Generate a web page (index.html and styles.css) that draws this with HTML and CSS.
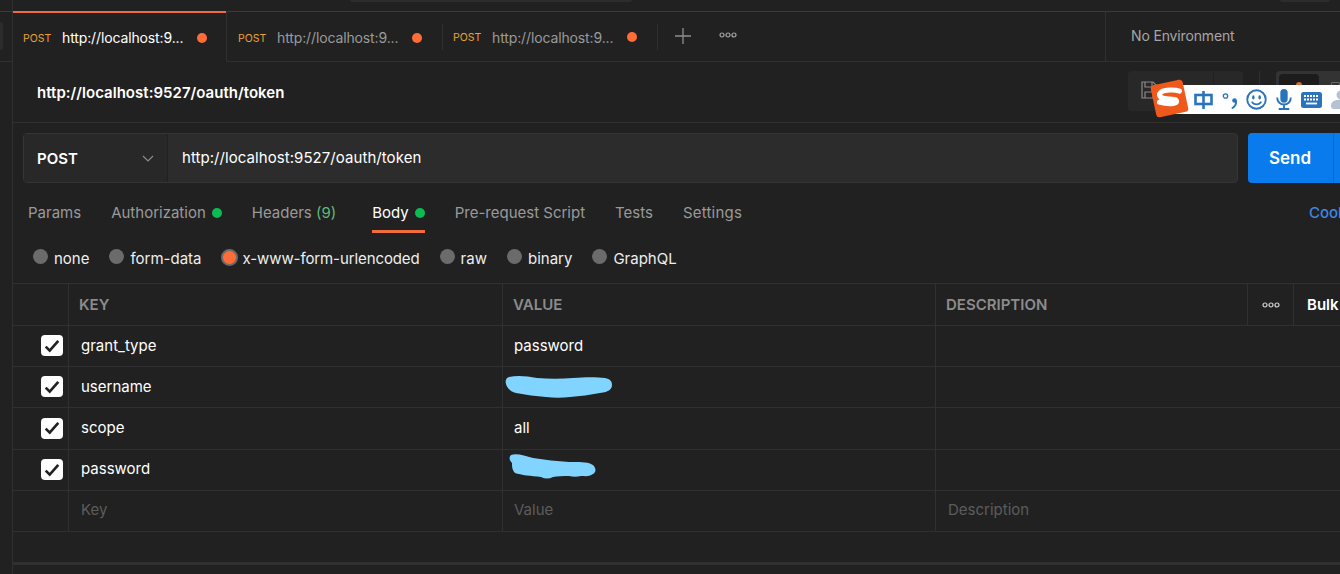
FILE: index.html
```html
<!DOCTYPE html>
<html lang="en">
<head>
<meta charset="utf-8">
<title>Postman</title>
<link rel="stylesheet" href="styles.css">
</head>
<body>
<div class="app">
  <aside class="rail">
    <div class="rail-top"><span class="rail-btn"></span></div>
  </aside>
  <div class="main">
    <div class="topbar"><span class="search"></span><span class="account"></span></div>
    <div class="tabrow">
      <div class="tab active"><span class="method">POST</span><span class="tab-url">http://localhost:9...</span><span class="dot"></span></div>
      <div class="tab"><span class="method">POST</span><span class="tab-url">http://localhost:9...</span><span class="dot"></span></div>
      <div class="tab last"><span class="method">POST</span><span class="tab-url">http://localhost:9...</span><span class="dot"></span></div>
      <div class="tab-tools">
        <svg class="plus" width="16" height="16" viewBox="0 0 16 16"><path d="M8 0v16M0 8h16" stroke="#8f8f8f" stroke-width="1.3"/></svg>
        <svg class="more" width="18" height="6" viewBox="0 0 18 6"><g fill="none" stroke="#a6a6a6" stroke-width="1.2"><circle cx="3" cy="3" r="2"/><circle cx="9" cy="3" r="2"/><circle cx="15" cy="3" r="2"/></g></svg>
      </div>
      <div class="env">No Environment</div>
    </div>
    <div class="titlerow">
      <span class="title">http://localhost:9527/oauth/token</span>
      <div class="title-actions">
        <div class="save">
          <svg width="16" height="18" viewBox="0 0 16 18"><g fill="none" stroke="#8a8a8a" stroke-width="1.2"><path d="M1 1h11l3 3v13H1z"/><path d="M4 1v5h7V1M4 17v-6h8v6"/></g></svg>
        </div>
        <div class="save-caret"></div>
        <div class="vsep"></div>
        <div class="mode"><div class="mode-on"><span class="mode-mark"></span></div><span class="mode-off"></span></div>
      </div>
    </div>
    <div class="urlrow">
      <div class="urlbox">
        <div class="verb"><span>POST</span>
          <svg width="12" height="7" viewBox="0 0 12 7"><path d="M1 1l5 5 5-5" fill="none" stroke="#8f8f8f" stroke-width="1.1"/></svg>
        </div>
        <div class="url">http://localhost:9527/oauth/token</div>
      </div>
      <div class="send"><span>Send</span></div>
    </div>
    <nav class="reqtabs">
      <span class="rt">Params</span>
      <span class="rt">Authorization<i class="gdot"></i></span>
      <span class="rt headers">Headers <em>(9)</em></span>
      <span class="rt on">Body<i class="gdot"></i></span>
      <span class="rt">Pre-request Script</span>
      <span class="rt">Tests</span>
      <span class="rt settings">Settings</span>
      <span class="cookies">Cookies</span>
    </nav>
    <div class="radios">
      <label class="radio"><i></i>none</label>
      <label class="radio tight"><i></i>form-data</label>
      <label class="radio sel"><i></i>x-www-form-urlencoded</label>
      <label class="radio"><i></i>raw</label>
      <label class="radio"><i></i>binary</label>
      <label class="radio"><i></i>GraphQL</label>
    </div>
    <div class="table">
      <div class="row head">
        <div class="c c0"></div>
        <div class="c c1">KEY</div>
        <div class="c c2">VALUE</div>
        <div class="c c3">DESCRIPTION</div>
        <div class="c c4"><svg width="18" height="6" viewBox="0 0 18 6"><g fill="none" stroke="#d4d4d4" stroke-width="1.2"><circle cx="3" cy="3" r="2"/><circle cx="9" cy="3" r="2"/><circle cx="15" cy="3" r="2"/></g></svg></div>
        <div class="c c5">Bulk Edit</div>
      </div>
      <div class="row">
        <div class="c c0"><span class="check"><svg width="16" height="14" viewBox="0 0 14 12"><path d="M1.500 6.500l3.500 3.500 7.500-8.500" fill="none" stroke="#212121" stroke-width="2.300"/></svg></span></div>
        <div class="c c1">grant_type</div>
        <div class="c c2">password</div>
        <div class="c c3"></div>
      </div>
      <div class="row">
        <div class="c c0"><span class="check"><svg width="16" height="14" viewBox="0 0 14 12"><path d="M1.500 6.500l3.500 3.500 7.500-8.500" fill="none" stroke="#212121" stroke-width="2.300"/></svg></span></div>
        <div class="c c1">username</div>
        <div class="c c2 blobcell">
          <svg class="blob" width="108" height="24" viewBox="0 0 108 24"><path d="M4 2C12 0 22 1 32 3c12 1 24 1 36 0 12-1 24-1 32 0 5 1 7 3 7 7s-3 7-12 8c-10 2-20 3-30 4-8 1-16 1-24 0-10-1-20-2-30-4C6 17 2 13 1 9 0 6 1 3 4 2z" fill="#80d4ff"/></svg>
        </div>
        <div class="c c3"></div>
      </div>
      <div class="row">
        <div class="c c0"><span class="check"><svg width="16" height="14" viewBox="0 0 14 12"><path d="M1.500 6.500l3.500 3.500 7.500-8.500" fill="none" stroke="#212121" stroke-width="2.300"/></svg></span></div>
        <div class="c c1">scope</div>
        <div class="c c2">all</div>
        <div class="c c3"></div>
      </div>
      <div class="row low">
        <div class="c c0"><span class="check"><svg width="16" height="14" viewBox="0 0 14 12"><path d="M1.500 6.500l3.500 3.500 7.500-8.500" fill="none" stroke="#212121" stroke-width="2.300"/></svg></span></div>
        <div class="c c1">password</div>
        <div class="c c2 blobcell">
          <svg class="blob blob2" width="88" height="26" viewBox="0 0 88 26"><path d="M2 1C8-1 16 2 24 4 36 6 48 7 60 8 70 8 78 8 82 10 87 12 88 18 84 20 80 23 76 22 72 22 68 23 64 23 60 22 54 22 48 22 44 23 40 25 36 25 32 23 22 22 12 21 6 19 3 16 3 12 3 9 0 6 0 3 2 1z" fill="#80d4ff"/></svg>
        </div>
        <div class="c c3"></div>
      </div>
      <div class="row ph low">
        <div class="c c0"></div>
        <div class="c c1">Key</div>
        <div class="c c2">Value</div>
        <div class="c c3">Description</div>
      </div>
    </div>
    <div class="resp"></div>
  </div>
</div>
<div class="ime">
  <svg class="ime-logo" width="40" height="40" viewBox="0 0 38 38">
    <rect x="3" y="3" width="31" height="31" rx="3" fill="#ef5a1c" transform="rotate(-12 18.500 18.500)"/>
    <path d="M28 11.500C24 10 14 10 10.500 12.500 7.500 15 9.500 18 14 18.500l9 1c3 .5 3 3 0 3.500-3 .6-9 .4-14-1" fill="none" stroke="#fff" stroke-width="4.800" stroke-linecap="round"/>
  </svg>
  <div class="ime-bar">
    <svg width="21" height="20" viewBox="0 0 20 20"><g fill="none" stroke="#2a74bb" stroke-width="2.600"><rect x="2" y="5" width="16" height="9"/><path d="M10 1v18"/></g></svg>
    <svg width="16" height="18" viewBox="0 0 16 18"><circle cx="3.500" cy="5" r="2.200" fill="none" stroke="#2a74bb" stroke-width="1.300"/><circle cx="12.500" cy="9.500" r="2.300" fill="#2a74bb"/><path d="M14 10c.5 3-1 5.500-3.500 7" fill="none" stroke="#2a74bb" stroke-width="1.800" stroke-linecap="round"/></svg>
    <svg width="21" height="21" viewBox="0 0 20 20"><circle cx="10" cy="10" r="8.800" fill="none" stroke="#2a74bb" stroke-width="1.800"/><ellipse cx="7" cy="8" rx="1.200" ry="2" fill="#2a74bb"/><ellipse cx="13" cy="8" rx="1.200" ry="2" fill="#2a74bb"/><path d="M5.500 12c2 3.500 7 3.500 9 0" fill="none" stroke="#2a74bb" stroke-width="1.600"/></svg>
    <svg width="18" height="21" viewBox="0 0 16 20"><rect x="4.500" y="0" width="7" height="13" rx="3.500" fill="#2a74bb"/><path d="M1.500 8c0 9 13 9 13 0M8 15v3M3 19h10" fill="none" stroke="#2a74bb" stroke-width="1.800"/></svg>
    <svg width="21" height="16" viewBox="0 0 21 16"><rect width="21" height="16" rx="2.500" fill="#2a74bb"/><path d="M3 4h15M3 7.500h15" stroke="#fff" stroke-width="1.800" stroke-dasharray="2 1"/><path d="M5 11.500h11" stroke="#fff" stroke-width="1.800"/></svg>
    <svg width="20" height="22" viewBox="0 0 20 20"><circle cx="11" cy="5" r="4.500" fill="#b4c2d1"/><path d="M1 16c0-4 3-6 7-6h6v9H4c-2 0-3-1-3-3z" fill="#b4c2d1"/></svg>
  </div>
</div>
</body>
</html>
```
FILE: styles.css
```css
* { box-sizing: border-box; }
html, body { margin: 0; padding: 0; height: 574px; overflow: hidden; background: #212121; }
body { font-family: Inter, "Liberation Sans", sans-serif; font-size: 15px; color: #fff; position: relative; width: 1340px; }
i, em { font-style: normal; }

.app { display: flex; width: 1340px; height: 574px; overflow: hidden; }

.rail { width: 13px; flex: none; border-right: 1px solid #303030; background: #212121; }
.rail-top { height: 62px; padding-top: 22px; border-bottom: 1px solid #303030; }
.rail-btn { display: block; width: 3px; height: 28px; background: #2c2c2c; border-radius: 0 3px 3px 0; }

.main { flex: 1; min-width: 0; display: flex; flex-direction: column; }

.topbar { height: 12px; flex: none; border-bottom: 1px solid #3a3a3a; display: flex; align-items: flex-start; margin-left: -13px; padding-left: 350px; position: relative; }
.search { width: 282px; height: 2px; background: #2c2c2c; border-radius: 0 0 3px 3px; }
.account { width: 50px; height: 2px; background: #2c2c2c; margin-left: 648px; border-radius: 0 0 3px 3px; }

.tabrow { height: 50px; flex: none; display: flex; align-items: stretch; border-bottom: 1px solid #303030; }
.tab { width: 215px; display: flex; align-items: center; padding: 1px 0 0 10px; border-right: 1px solid #303030; position: relative; margin-bottom: -1px; }
.tab.active { width: 214px; background: #212121; box-shadow: inset 0 2px 0 #f26b3a; margin-top: -1px; padding-top: 3px; border-bottom: 1px solid #212121; }
.tab + .tab { border-right: 0; padding-left: 11px; }
.tab.last { padding-left: 11px; width: 216px; margin-bottom: 0; }
.tab.last::before, .tab-tools::before { content: ""; position: absolute; left: 0; top: 12px; height: 26px; width: 1px; background: #303030; }
.method { font-size: 10.5px; color: #e9a235; width: 39px; flex: none; padding-top: 1px; }
.tab-url { font-size: 14px; letter-spacing: -0.13px; color: #9a9a9a; width: 135px; flex: none; white-space: nowrap; }
.tab.active .tab-url { color: #fff; }
.dot { width: 10px; height: 10px; border-radius: 50%; background: #ff6c37; flex: none; }
.tab-tools { width: 448px; position: relative; display: flex; align-items: center; margin-left: -1px; padding-left: 18px; }
.plus { margin-top: -2px; flex: none; }
.more { margin-left: 28px; margin-top: -3px; flex: none; }
.env { flex: 1; border-left: 1px solid #303030; padding-left: 25px; line-height: 48px; color: #a6a6a6; font-size: 14px; letter-spacing: -0.15px; }

.titlerow { height: 61px; flex: none; display: flex; align-items: center; justify-content: space-between; border-bottom: 1px solid #303030; padding-left: 24px; }
.title { font-weight: 600; font-size: 15px; margin-top: 1px; letter-spacing: 0.03px; }
.title-actions { display: flex; align-items: center; height: 40px; margin-top: -2px; width: 212px; }
.save { width: 85px; height: 40px; background: #282828; border-radius: 4px 0 0 4px; padding: 10px 0 0 13px; }
.save-caret { width: 30px; height: 40px; background: #282828; border-left: 1px solid #212121; border-radius: 0 4px 4px 0; }
.vsep { width: 1px; height: 40px; background: #303030; margin: 0 16px; }
.mode { flex: 1; height: 40px; background: #333; border-radius: 4px 0 0 4px; padding: 3px 0 3px 3px; display: flex; }
.mode-on { width: 40px; height: 34px; background: #1c1c1c; border-radius: 4px; padding: 8px 0 0 17px; }
.mode-mark { display: block; width: 6px; height: 6px; border-radius: 50%; background: #c96a3a; }
.mode-off { width: 9px; height: 12px; margin: 8px 0 0 12px; border: 1px solid #666; border-radius: 1px; }

.urlrow { height: 61px; flex: none; display: flex; padding: 10px 0 0 10px; }
.urlbox { width: 1215px; height: 50px; display: flex; border: 1px solid #353535; border-radius: 4px; background: #2c2c2c; }
.verb { width: 144px; flex: none; display: flex; align-items: center; justify-content: space-between; padding: 0 13px 0 13px; border-right: 1px solid #212121; font-weight: 600; background: #282828; }
.verb svg { margin-top: 1px; }
.url { padding-left: 14px; line-height: 47px; letter-spacing: 0.06px; }
.send { flex: none; width: 92px; height: 50px; margin-left: 10px; background: #097bed; border-radius: 4px 0 0 4px; font-weight: 600; font-size: 17px; line-height: 50px; padding-left: 21px; display: flex; }
.send::after { content: ""; width: 1px; height: 50px; background: #0a6ac9; margin-left: 22px; }

.reqtabs { height: 45px; flex: none; margin-top: 19px; display: flex; align-items: flex-start; padding-left: 15px; position: relative; color: #9a9a9a; }
.rt { height: 30px; line-height: 20px; margin-right: 30px; display: flex; align-items: flex-start; white-space: pre; }
.rt.headers { margin-right: 36px; }
.rt.settings { letter-spacing: 0.2px; }
.rt em { color: #5fb97c; }
.rt.on { color: #fff; box-shadow: inset 0 -3px 0 #f26b3a; }
.gdot { width: 10px; height: 10px; border-radius: 50%; background: #0cbb52; margin: 5px 0 0 6px; }
.cookies { position: absolute; left: 1296px; top: 0; line-height: 20px; color: #3f87e0; font-weight: 500; white-space: nowrap; }

.radios { height: 36px; flex: none; display: flex; padding: 1px 0 0 20px; border-bottom: 1px solid #303030; }
.radio { display: flex; align-items: flex-start; line-height: 20px; color: #eee; margin-right: 20px; white-space: nowrap; height: 20px; }
.radio.tight { margin-right: 19px; }
.radio i { width: 15px; height: 15px; border-radius: 50%; background: #6b6b6b; margin: 0 6px 0 0; flex: none; }
.radio.sel { letter-spacing: -0.1px; }
.radio.sel i { width: 17px; height: 17px; background: #ff6c37; border: 2px solid #6b6b6b; margin: 0 5px 0 0; }

.table { flex: none; }
.row { display: flex; height: 41px; border-bottom: 1px solid #303030; align-items: stretch; }
.row:nth-child(4) { height: 42px; }
.row.head { height: 42px; color: #8c8c8c; font-weight: 600; }
.c { display: flex; align-items: center; border-right: 1px solid #303030; padding: 0 0 2px 12px; white-space: nowrap; flex: none; }
.head .c { padding-bottom: 0; }
.low .c1 { padding-bottom: 3px; }
.c0 { width: 56px; padding: 0 0 1px 28px; }
.c1 { width: 434px; }
.c2 { width: 433px; padding-left: 11px; }
.c3 { flex: 1; border-right: 0; overflow: hidden; }
.ph .c { padding-bottom: 3px; }
.head .c1 { padding-left: 10px; }
.head .c2 { padding-left: 10px; }
.head .c3 { flex: none; width: 312px; padding-left: 10px; border-right: 1px solid #303030; }
.head .c4 { width: 46px; justify-content: center; padding: 0; }
.head .c5 { border-right: 0; color: #fff; font-weight: 600; padding-left: 13px; }
.ph { color: #5c5c5c; }
.check { width: 22px; height: 21px; background: #fff; border-radius: 4px; display: flex; align-items: center; justify-content: center; }
.blobcell { padding: 0 0 0 2px; }
.blob { margin-top: 0; }
.blob2 { margin: -6px 0 0 4px; }

.resp { margin-top: 30px; height: 3px; background: #303030; flex: none; }

.ime { position: absolute; left: 1150px; top: 79px; width: 190px; height: 40px; }
.ime-logo { position: absolute; left: 0; top: 0; z-index: 1; }
.ime-bar { position: absolute; left: 18px; right: 0; top: 6px; height: 29px; background: #fff; display: flex; align-items: center; padding-left: 25px; gap: 8px; overflow: hidden; }
.ime-bar svg { flex: none; }
```
